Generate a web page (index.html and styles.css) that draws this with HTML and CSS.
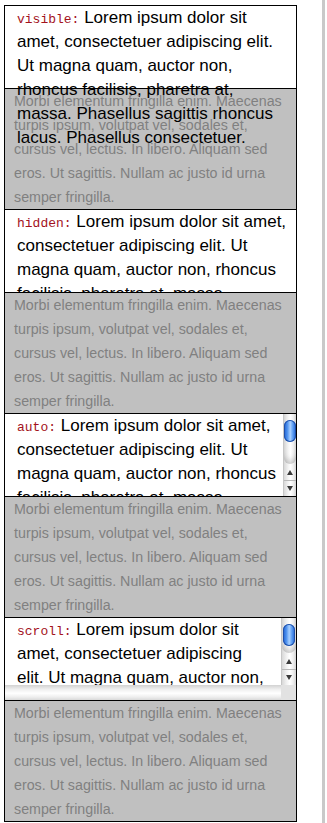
FILE: index.html
```html
<!DOCTYPE html>
<html>
<head>
  <title>overflow</title>
  <meta charset="utf-8">
  <link rel="stylesheet" href="styles.css">
</head>
<body>
  <div class="page">
    <div class="demo">
      <!-- overflow: visible -->
      <div class="box box-visible">
        <code>visible:</code> Lorem ipsum dolor sit amet, consectetuer adipiscing elit. Ut magna quam, auctor non, rhoncus facilisis, pharetra at, massa. Phasellus sagittis rhoncus lacus. Phasellus consectetuer.
      </div>
      <div class="filler">Morbi elementum fringilla enim. Maecenas turpis ipsum, volutpat vel, sodales et, cursus vel, lectus. In libero. Aliquam sed eros. Ut sagittis. Nullam ac justo id urna semper fringilla.</div>

      <!-- overflow: hidden -->
      <div class="box box-hidden">
        <code>hidden:</code> Lorem ipsum dolor sit amet, consectetuer adipiscing elit. Ut magna quam, auctor non, rhoncus facilisis, pharetra at, massa. Phasellus sagittis rhoncus lacus. Phasellus consectetuer.
      </div>
      <div class="filler">Morbi elementum fringilla enim. Maecenas turpis ipsum, volutpat vel, sodales et, cursus vel, lectus. In libero. Aliquam sed eros. Ut sagittis. Nullam ac justo id urna semper fringilla.</div>

      <!-- overflow: auto -->
      <div class="box box-auto">
        <div class="box-text"><code>auto:</code> Lorem ipsum dolor sit amet, consectetuer adipiscing elit. Ut magna quam, auctor non, rhoncus facilisis, pharetra at, massa. Phasellus sagittis rhoncus lacus. Phasellus consectetuer.</div>
        <div class="vbar">
          <div class="track"><div class="thumb"></div></div>
          <div class="arrow arrow-up"></div>
          <div class="arrow arrow-down"></div>
        </div>
      </div>
      <div class="filler">Morbi elementum fringilla enim. Maecenas turpis ipsum, volutpat vel, sodales et, cursus vel, lectus. In libero. Aliquam sed eros. Ut sagittis. Nullam ac justo id urna semper fringilla.</div>

      <!-- overflow: scroll -->
      <div class="box box-scroll">
        <div class="box-text"><code>scroll:</code> Lorem ipsum dolor sit amet, consectetuer adipiscing elit. Ut magna quam, auctor non, rhoncus facilisis, pharetra at, massa. Phasellus sagittis rhoncus lacus. Phasellus consectetuer.</div>
        <div class="vbar">
          <div class="track"><div class="thumb"></div></div>
          <div class="arrow arrow-up"></div>
          <div class="arrow arrow-down"></div>
        </div>
        <div class="hbar"></div>
        <div class="corner"></div>
      </div>
      <div class="filler">Morbi elementum fringilla enim. Maecenas turpis ipsum, volutpat vel, sodales et, cursus vel, lectus. In libero. Aliquam sed eros. Ut sagittis. Nullam ac justo id urna semper fringilla.</div>
    </div>
    <div class="edge"></div>
  </div>
</body>
</html>
```

FILE: styles.css
```css
body {
  margin: 0;
  background: #fff;
  font-family: "Liberation Sans", Arial, Helvetica, sans-serif;
}

.page {
  display: flex;
  min-height: 100vh;
}

.demo {
  align-self: flex-start;
  width: 293px;
  box-sizing: border-box;
  margin: 5px 0 0 4px;
  border: 1px solid #000;
  border-bottom: none;
}

.box {
  height: 82px;
  padding: 0 4px 0 12px;
  border-bottom: 1px solid #000;
  background: #fff;
  color: #000;
  font-size: 17px;
  line-height: 24px;
}

.box code {
  font-family: "Liberation Mono", "DejaVu Sans Mono", monospace;
  font-size: 13px;
  line-height: 1;
  color: #a3121c;
}

.box-visible {
  overflow: visible;
}

.box-hidden {
  overflow: hidden;
}

.box-auto {
  display: flex;
  padding: 0;
  overflow: hidden;
}

.box-auto .box-text {
  flex: 1;
  padding: 0 1px 0 12px;
  overflow: hidden;
}

.box-scroll {
  display: grid;
  grid-template-columns: minmax(0, 1fr) 15px;
  grid-template-rows: minmax(0, 1fr) 15px;
  padding: 0;
  overflow: hidden;
}

.box-scroll .box-text {
  padding: 0 14px 0 12px;
  overflow: hidden;
}

.filler {
  height: 120px;
  padding: 0 12px 0 9px;
  border-bottom: 1px solid #000;
  background: #c0c0c0;
  color: #808080;
  font-size: 14.25px;
  line-height: 24px;
}

/* fake aqua scrollbars */
.vbar {
  display: flex;
  flex-direction: column;
  border-left: 1px solid #c6c6c6;
  background: linear-gradient(to right, #d8d8d8, #f3f3f3 35%, #fff 55%, #ededed 80%, #d4d4d4);
}

.track {
  flex: 1;
  padding-top: 6px;
  border-radius: 0 0 7px 7px;
  box-shadow: inset 0 -7px 6px -4px rgba(0, 0, 0, 0.2);
}

.thumb {
  width: 12px;
  height: 22px;
  margin: 0 auto;
  border-radius: 6px;
  background: linear-gradient(to right, #1d5fd0, #4f92ee 28%, #a8d0ff 52%, #5b9cf2 74%, #1d5fd0);
  box-shadow: inset 0 0 0 1px #2050a8;
}

.arrow {
  height: 16px;
  display: flex;
  align-items: center;
  justify-content: center;
}

.arrow::before {
  content: "";
  border-left: 3px solid transparent;
  border-right: 3px solid transparent;
}

.arrow-up::before {
  border-bottom: 5px solid #3a3a3a;
}

.arrow-down {
  height: 15px;
  border-top: 1px solid #b8b8b8;
}

.arrow-down::before {
  border-top: 5px solid #3a3a3a;
}

.hbar {
  background: linear-gradient(to bottom, #d2d2d2, #f0f0f0 30%, #fff 55%, #eeeeee 80%, #dadada);
}

.corner {
  background: #e2e2e2;
}

.edge {
  width: 3px;
  margin: 0 2px 0 auto;
  background: #c9c9c9;
}
```
